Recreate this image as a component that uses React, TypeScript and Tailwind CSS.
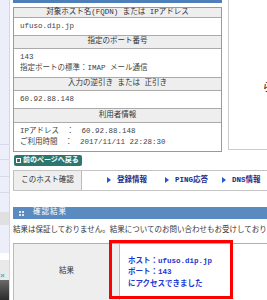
import { } from "react";

const rows: { head: string; lines: string[]; h: number; hh: number }[] = [
  { head: "対象ホスト名(FQDN) または IPアドレス", lines: ["ufuso.dip.jp"], hh: 10, h: 18 },
  { head: "指定のポート番号", lines: ["143", "指定ポートの標準：IMAP メール通信"], hh: 13, h: 29 },
  { head: "入力の逆引き または 正引き", lines: ["60.92.88.148"], hh: 13, h: 18 },
  { head: "利用者情報", lines: ["IPアドレス　：　60.92.88.148", "ご利用時間　：　2017/11/11 22:28:30"], hh: 14, h: 28 },
];

function Arrow() {
  return <span className="inline-block w-0 h-0 border-y-[3px] border-y-transparent border-l-[4px] border-l-[#2458d6] mr-[6px] align-middle" />;
}

export default function App() {
  return (
    <div className="relative w-[267px] h-[300px] overflow-hidden bg-white flex [font-family:'Liberation_Mono','Noto_Sans_CJK_JP',monospace]">
      {/* side strip of the neighbouring pane */}
      <div className="w-[10px] shrink-0 flex flex-col border-r border-[#d4d6e0]">
        <div className="h-[145px] bg-[#eceefa] border-b border-[#d6d9ea]" />
        <div className="h-[15px] bg-[#eceefa] border-b border-[#d6d9ea]" />
        <div className="h-[17px] bg-[#eceefa] border-b border-[#d6d9ea]" />
        <div className="h-[16px] bg-[#eceefa] border-b border-[#d6d9ea]" />
        <div className="h-[19px] bg-[#eceefa]" />
        <div className="h-[13px] bg-[#e0e0e0]" />
        <div className="h-[28px] bg-[#eceefa]" />
        <div className="h-[7px] bg-white" />
        <div className="h-[20px] bg-[#e9e9e9] flex items-end">
          <span className="text-[8px] leading-[8px] text-[#3bb3d0] font-bold">×</span>
        </div>
        <div className="flex-1 bg-gradient-to-b from-[#6a6a6a] to-[#2c2c2c]" />
      </div>

      <div className="ml-[3px] w-[254px] shrink-0 flex flex-col text-[7.5px] text-[#333]">
        <div className="flex h-[150px]">
          <div className="w-[209px] shrink-0">
            <div className="h-[3px] bg-[#4f7fb8]" />
            <div className="mt-[4px] border border-[#9a9a9a]">
              {rows.map((r, i) => (
                <div key={i}>
                  <div className="bg-[#eeeeee] border-b border-[#aaaaaa] flex items-center justify-center" style={{ height: r.hh }}>
                    {r.head}
                  </div>
                  <div className={`pl-[6px] flex flex-col justify-center leading-[11px] text-[#444] ${i < rows.length - 1 ? "border-b border-[#aaaaaa]" : ""}`} style={{ height: r.h }}>
                    {r.lines.map((l, j) => <div key={j}>{l}</div>)}
                  </div>
                </div>
              ))}
            </div>
          </div>
          <div className="ml-[6px] flex-1 border-l border-b border-[#cccccc] pl-[33px] pt-[80px] text-[12px] text-[#333]">ら</div>
        </div>

        <button className="mt-[5px] ml-[1px] w-[68px] h-[12px] rounded-[2px] bg-[#2c7670] text-white font-bold text-[7px] flex items-center px-[2px] gap-[2px] whitespace-nowrap overflow-hidden">
          <span className="w-[5px] h-[5px] shrink-0 border border-white bg-[#2c7670]" />
          前のページへ戻る
        </button>

        <div className="mt-[4px] h-[23px] flex border-y border-[#c4c4c4]">
          <div className="w-[69px] shrink-0 bg-[#eeeeee] border-x border-[#bbbbbb] flex items-center justify-center text-[#333]">このホスト確認</div>
          <div className="flex items-center pl-[25px] text-[#1c2a86] font-bold whitespace-nowrap">
            <div className="w-[58px] shrink-0"><Arrow />登録情報</div>
            <div className="w-[57px] shrink-0"><Arrow />PING応答</div>
            <div className="shrink-0"><Arrow />DNS情報</div>
          </div>
        </div>

        <div className="mt-[16px] h-[12px] bg-[#5a8bc0] flex items-center text-white">
          <span className="ml-[6px] w-[5px] h-[5px] grid grid-cols-2 gap-[1px]">
            <span className="bg-[#dfe6ef]" /><span className="bg-[#dfe6ef]" /><span className="bg-[#dfe6ef]" /><span className="bg-[#dfe6ef]" />
          </span>
          <span className="ml-[9px] tracking-[1px]">確認結果</span>
        </div>

        <p className="mt-[6px] h-[10px] leading-[10px] whitespace-nowrap text-[#333]">結果は保証しておりません。結果についてのお問い合わせもお受けしておりません。</p>

        <div className="mt-[8px] flex h-[62px] border-t border-[#b0b0b0]">
          <div className="w-[107px] shrink-0 bg-[#eeeeee] border-x border-[#bbbbbb] flex items-center justify-center">結果</div>
          <div className="pl-[8px] pt-[12px] leading-[11.5px] text-[#1c36d4] font-bold">
            <div>ホスト：ufuso.dip.jp</div>
            <div>ポート：143</div>
            <div>にアクセスできました</div>
          </div>
        </div>
      </div>

      <div className="absolute left-[109px] top-[240px] w-[124px] h-[59px] border-[3px] border-[#ff0000]" />
    </div>
  );
}
